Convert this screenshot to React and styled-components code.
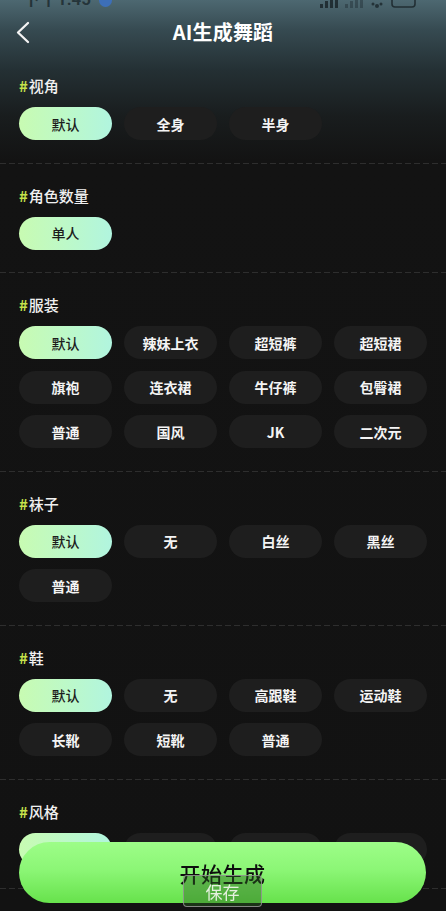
import React from "react";
import styled, { createGlobalStyle } from "styled-components";

const GlobalStyle = createGlobalStyle`
  html { scrollbar-width: none; }
  html::-webkit-scrollbar, body::-webkit-scrollbar { display: none; }
  body {
    margin: 0;
    background: #121212;
    font-family: "Noto Sans CJK SC", "Noto Sans", "Liberation Sans", sans-serif;
    color: #f2f2f2;
  }
  * { box-sizing: border-box; }
`;

const Page = styled.div`
  width: 446px;
  min-height: 100vh;
  background: linear-gradient(
    180deg,
    #4d6871 0px,
    #364a51 30px,
    #243034 70px,
    #191d1e 115px,
    #131313 160px,
    #121212 100%
  );
`;

const StatusBar = styled.div`
  height: 8px;
  overflow: hidden;
  display: flex;
  align-items: flex-end;
  justify-content: space-between;
  padding: 0 29px 0 23px;
`;

const StatusLeft = styled.div`
  display: flex;
  align-items: flex-end;
  gap: 8px;
  height: 18px;
  font-size: 17px;
  line-height: 17px;
  font-weight: 700;
  color: rgba(20, 30, 34, 0.7);
  font-family: "Roboto", "Noto Sans CJK SC", sans-serif;
`;

const StatusDot = styled.span`
  width: 13px;
  height: 13px;
  border-radius: 50%;
  background: #3d6fb8;
  display: inline-block;
  margin-bottom: 1px;
`;

const StatusRight = styled.div`
  display: flex;
  align-items: flex-end;
  gap: 7px;
  height: 16px;
`;

const NavBar = styled.div`
  height: 46px;
  padding-top: 2px;
  display: grid;
  grid-template-columns: 1fr auto 1fr;
  align-items: center;
`;

const BackButton = styled.div`
  padding-left: 16px;
  display: flex;
  align-items: center;
`;

const Title = styled.div`
  font-size: 20px;
  font-weight: 700;
  color: #ffffff;
  line-height: 24px;
  letter-spacing: 0.2px;
`;

const Section = styled.section`
  padding: 21px 19px 23.5px;
  background-image: repeating-linear-gradient(
    90deg,
    #2e2e2e 0 6px,
    transparent 6px 9px
  );
  background-size: 100% 1px;
  background-repeat: no-repeat;
  background-position: bottom left;
`;

const Label = styled.div`
  font-size: 15px;
  line-height: 22px;
  height: 22px;
  font-weight: 500;
  color: #f0f0f0;
  margin-bottom: 10px;
`;

const Hash = styled.span`
  color: #c6e24c;
  font-weight: 700;
  margin-right: 1px;
`;

const ChipGrid = styled.div`
  display: grid;
  grid-template-columns: repeat(4, 1fr);
  column-gap: 12px;
  row-gap: 11.5px;
`;

const Chip = styled.div`
  height: 33px;
  border-radius: 17px;
  display: flex;
  align-items: center;
  justify-content: center;
  font-size: 14px;
  font-weight: ${(p) => (p.$active ? 500 : 700)};
  color: ${(p) => (p.$active ? "#1d1d1d" : "#f4f4f4")};
  background: ${(p) =>
    p.$active
      ? "linear-gradient(90deg, #c8fbb2 0%, #bdf9c8 50%, #b1f5df 100%)"
      : "#1e1e1e"};
`;

const BottomBar = styled.div`
  position: fixed;
  left: 19px;
  right: 20px;
  bottom: 8px;
  height: 61px;
`;

const GenerateButton = styled.div`
  height: 61px;
  border-radius: 31px;
  background: linear-gradient(180deg, #9dfd88 0%, #8cf676 45%, #67e24c 100%);
  display: flex;
  align-items: center;
  justify-content: center;
  font-size: 21px;
  font-weight: 500;
  color: #0e0e0e;
  letter-spacing: 0.5px;
`;

const SaveBadge = styled.div`
  position: absolute;
  left: 164px;
  top: 33px;
  width: 79px;
  height: 32px;
  border-radius: 4px;
  border: 1px solid rgba(150, 150, 150, 0.85);
  background: rgba(40, 95, 30, 0.42);
  color: #e4f0de;
  font-size: 17px;
  display: flex;
  align-items: center;
  justify-content: center;
`;

const sections = [
  { title: "视角", items: ["默认", "全身", "半身"] },
  { title: "角色数量", items: ["单人"] },
  {
    title: "服装",
    items: ["默认", "辣妹上衣", "超短裤", "超短裙", "旗袍", "连衣裙", "牛仔裤", "包臀裙", "普通", "国风", "JK", "二次元"],
  },
  { title: "袜子", items: ["默认", "无", "白丝", "黑丝", "普通"] },
  { title: "鞋", items: ["默认", "无", "高跟鞋", "运动鞋", "长靴", "短靴", "普通"] },
  { title: "风格", items: ["默认", "可爱", "性感", "酷飒"] },
];

function SignalIcon({ dim }) {
  const c = dim ? "rgba(20,30,34,0.35)" : "rgba(20,30,34,0.75)";
  return (
    <svg width="18" height="14" viewBox="0 0 18 14">
      <rect x="0" y="10" width="3" height="4" fill={c} />
      <rect x="5" y="7" width="3" height="7" fill={c} />
      <rect x="10" y="4" width="3" height="10" fill={c} />
      <rect x="15" y="0" width="3" height="14" fill={c} />
    </svg>
  );
}

export default function App() {
  return (
    <>
      <GlobalStyle />
      <Page>
        <StatusBar>
          <StatusLeft>
            <span>下午1:45</span>
            <StatusDot />
          </StatusLeft>
          <StatusRight>
            <SignalIcon />
            <SignalIcon dim />
            <svg width="14" height="12" viewBox="0 0 14 12">
              <circle cx="7" cy="10" r="2" fill="rgba(20,30,34,0.7)" />
              <circle cx="3" cy="8" r="1.5" fill="rgba(20,30,34,0.7)" />
              <circle cx="11" cy="8" r="1.5" fill="rgba(20,30,34,0.7)" />
            </svg>
            <svg width="26" height="14" viewBox="0 0 26 14">
              <rect x="1" y="1" width="23" height="12" rx="3" fill="none" stroke="rgba(20,30,34,0.75)" strokeWidth="1.6" />
            </svg>
          </StatusRight>
        </StatusBar>
        <NavBar>
          <BackButton>
            <svg width="14" height="23" viewBox="0 0 14 23">
              <polyline
                points="12,2 2,11.5 12,21"
                fill="none"
                stroke="#f4f4f4"
                strokeWidth="2.3"
                strokeLinecap="round"
                strokeLinejoin="round"
              />
            </svg>
          </BackButton>
          <Title>AI生成舞蹈</Title>
          <div />
        </NavBar>
        {sections.map((s) => (
          <Section key={s.title}>
            <Label>
              <Hash>#</Hash>
              {s.title}
            </Label>
            <ChipGrid>
              {s.items.map((it, i) => (
                <Chip key={it + i} $active={i === 0}>
                  {it}
                </Chip>
              ))}
            </ChipGrid>
          </Section>
        ))}
        <BottomBar>
          <GenerateButton>开始生成</GenerateButton>
          <SaveBadge>保存</SaveBadge>
        </BottomBar>
      </Page>
    </>
  );
}
